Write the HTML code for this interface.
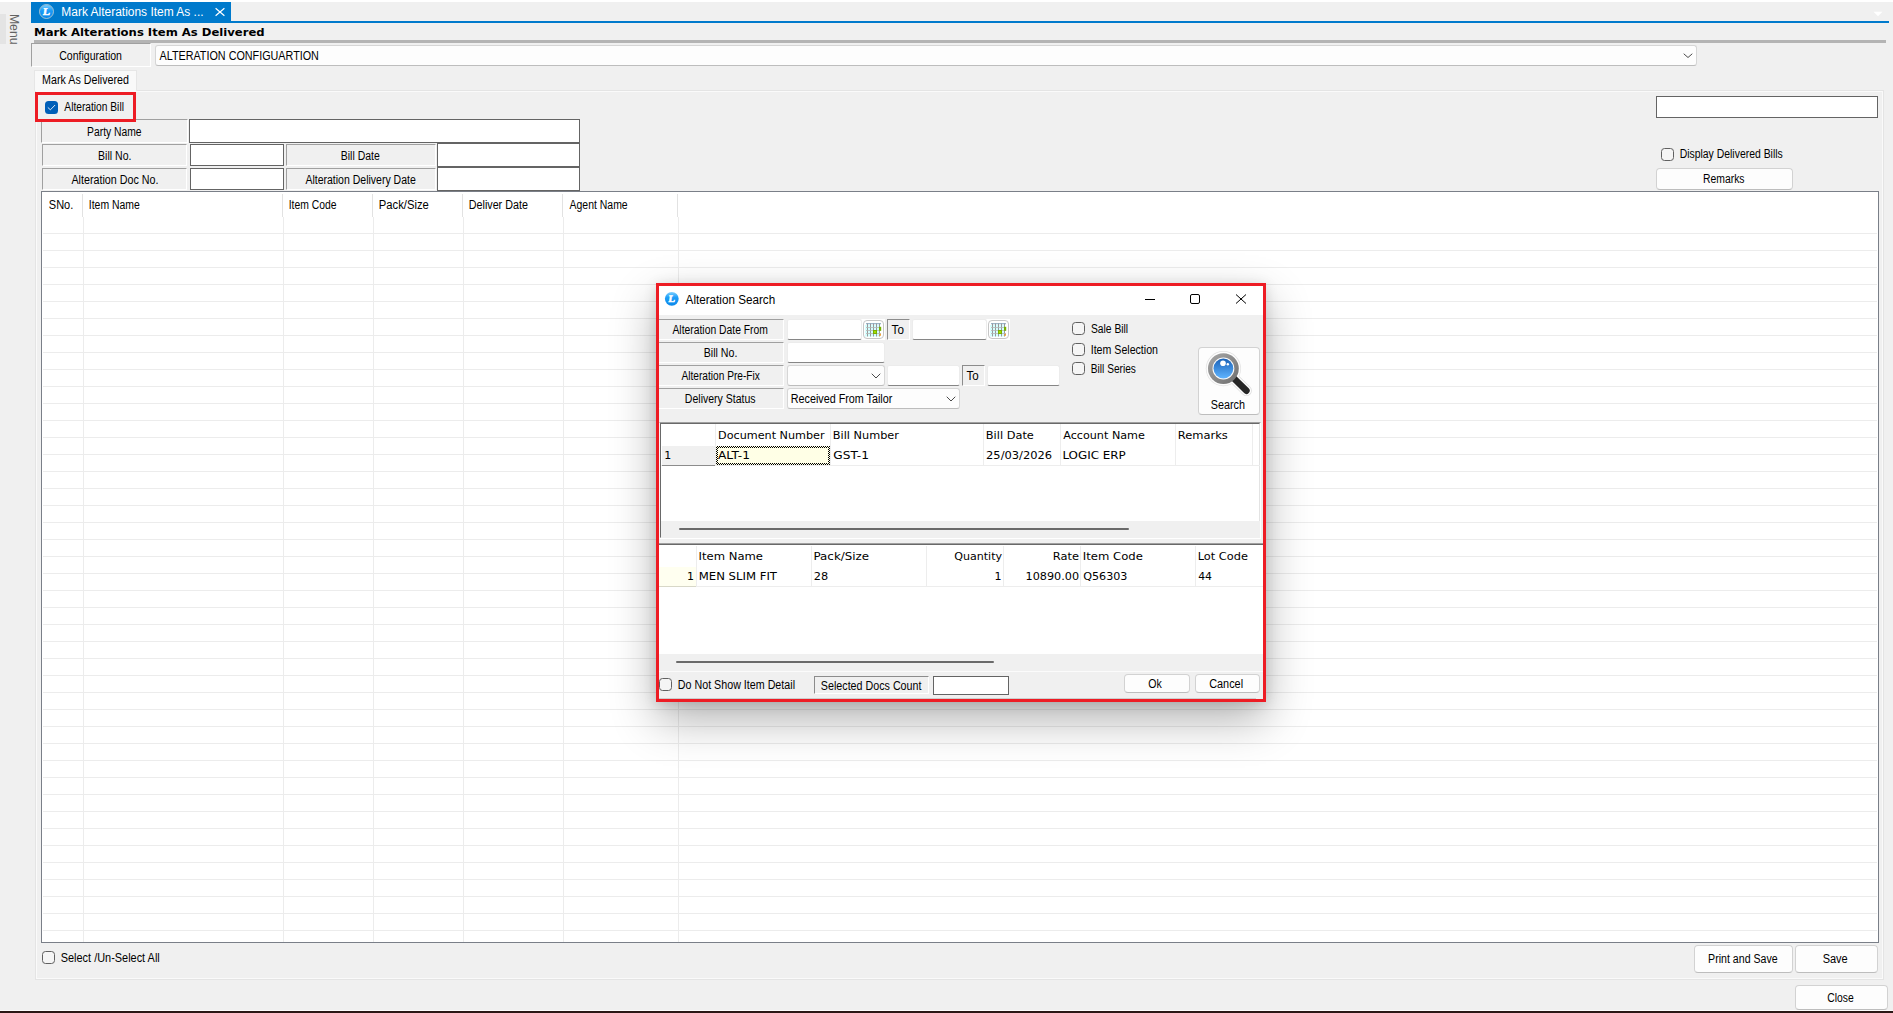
<!DOCTYPE html>
<html lang="en"><head><meta charset="utf-8"><title>Mark Alterations Item As Delivered</title>
<style>
html,body{margin:0;padding:0;}
body{width:1893px;height:1013px;overflow:hidden;background:#f0f0f0;position:relative;font-family:"Liberation Sans",sans-serif;font-size:11px;}
.layer{position:absolute;left:0;top:0;width:1893px;height:1013px;overflow:hidden;}
.layer div{position:absolute;}
.layer>svg.txt{position:absolute;left:0;top:0;}
</style></head><body>
<div class="layer" id="main">
<div style="left:0px;top:0px;width:1893px;height:2px;background:#fff;"></div>
<div style="left:0px;top:14px;width:6px;height:30px;background:#e4e4e4;"></div>
<div style="left:31px;top:2px;width:200px;height:21px;background:#007acc;"></div>
<div style="left:31px;top:21px;width:1858px;height:2px;background:#007acc;"></div>
<svg style="position:absolute;left:38px;top:2px" width="18" height="18" viewBox="0 0 18 18"><defs><linearGradient id="lg46" x1="0" y1="0" x2="0" y2="1"><stop offset="0" stop-color="#7fd0ff"/><stop offset="0.4" stop-color="#1e9ef8"/><stop offset="1" stop-color="#0a88ea"/></linearGradient></defs><circle cx="8.5" cy="9.5" r="6.6000000000000005" fill="url(#lg46)"/><circle cx="8.5" cy="9.5" r="7.0" fill="none" stroke="#efe6d8" stroke-opacity="0.85" stroke-width="0.8"/><text x="8.7" y="13.20" font-family='"Liberation Serif", serif' font-size="10.4" font-weight="bold" fill="#fff" stroke="#fff" stroke-width="0.6" text-anchor="middle" transform="skewX(-8)" style="transform-origin:8.5px 9.5px">L</text></svg>
<svg style="position:absolute;left:214px;top:6px" width="12" height="12" viewBox="0 0 12 12"><path d="M1.6 2.2 L10.4 9.8 M10.4 2.2 L1.6 9.8" stroke="#fff" stroke-width="1.2" fill="none"/></svg>
<svg style="position:absolute;left:1873px;top:11px" width="10" height="6" viewBox="0 0 10 6"><path d="M0.5 0.8 L9.5 0.8 L5 5.2 Z" fill="#fff"/></svg>
<div style="left:34px;top:40px;width:1852px;height:3px;background:#b4b4b4;"></div>
<div style="left:31px;top:43px;width:120px;height:24px;box-sizing:border-box;background:#f0f0f0;border-top:1px solid #a0a0a0;border-left:1px solid #a0a0a0;border-bottom:1px solid #ffffff;border-right:1px solid #ffffff;"></div>
<div style="left:155px;top:45px;width:1542px;height:21px;box-sizing:border-box;background:#fdfdfd;border:1px solid #d6d6d6;border-bottom-color:#bdbdbd;border-radius:3px;"></div>
<svg style="position:absolute;left:1683.0px;top:52.9px" width="10" height="6" viewBox="-1 -1 10 6"><path d="M0 0 L4.0 3.5 L8 0" fill="none" stroke="#4a4a4a" stroke-width="1" stroke-linecap="round" stroke-linejoin="round"/></svg>
<div style="left:35px;top:90px;width:1849px;height:890px;box-sizing:border-box;border:1px solid #e4e4e4;background:#f0f0f0;box-shadow:inset 0 0 0 1px #fafafa;"></div>
<div style="left:34px;top:70px;width:103px;height:21px;box-sizing:border-box;border:1px solid #e6e6e6;border-bottom:none;background:#f9f9f9;"></div>
<div style="left:41px;top:119px;width:147px;height:24px;box-sizing:border-box;background:#f0f0f0;border-top:1px solid #a0a0a0;border-left:1px solid #a0a0a0;border-bottom:1px solid #ffffff;border-right:1px solid #ffffff;"></div>
<div style="left:189px;top:119px;width:391px;height:24px;box-sizing:border-box;background:#fff;border:1px solid #646464;"></div>
<div style="left:42px;top:144px;width:145px;height:22px;box-sizing:border-box;background:#f0f0f0;border-top:1px solid #a0a0a0;border-left:1px solid #a0a0a0;border-bottom:1px solid #ffffff;border-right:1px solid #ffffff;"></div>
<div style="left:190px;top:144px;width:94px;height:22px;box-sizing:border-box;background:#fff;border:1px solid #646464;"></div>
<div style="left:286px;top:144px;width:150px;height:22px;box-sizing:border-box;background:#f0f0f0;border-top:1px solid #a0a0a0;border-left:1px solid #a0a0a0;border-bottom:1px solid #ffffff;border-right:1px solid #ffffff;"></div>
<div style="left:437px;top:143px;width:143px;height:24px;box-sizing:border-box;background:#fff;border:1px solid #646464;"></div>
<div style="left:42px;top:168px;width:145px;height:22px;box-sizing:border-box;background:#f0f0f0;border-top:1px solid #a0a0a0;border-left:1px solid #a0a0a0;border-bottom:1px solid #ffffff;border-right:1px solid #ffffff;"></div>
<div style="left:190px;top:168px;width:94px;height:22px;box-sizing:border-box;background:#fff;border:1px solid #646464;"></div>
<div style="left:286px;top:168px;width:150px;height:22px;box-sizing:border-box;background:#f0f0f0;border-top:1px solid #a0a0a0;border-left:1px solid #a0a0a0;border-bottom:1px solid #ffffff;border-right:1px solid #ffffff;"></div>
<div style="left:437px;top:167px;width:143px;height:24px;box-sizing:border-box;background:#fff;border:1px solid #646464;"></div>
<div style="left:35px;top:92px;width:101px;height:30px;box-sizing:border-box;border:3px solid #ed1c24;background:#f0f0f0;"></div>
<div style="left:45px;top:101px;width:13px;height:13px;box-sizing:border-box;background:#005fb8;border-radius:3.5px;"><svg width="13" height="13" viewBox="0 0 13 13" style="position:absolute;left:0;top:0"><path d="M3.1 6.7 L5.4 8.8 L9.8 4.3" fill="none" stroke="#fff" stroke-opacity="0.9" stroke-width="0.95" stroke-linecap="round" stroke-linejoin="round"/></svg></div>
<div style="left:1656px;top:96px;width:222px;height:22px;box-sizing:border-box;background:#fff;border:1px solid #646464;"></div>
<div style="left:1661px;top:148px;width:13px;height:13px;box-sizing:border-box;background:#f5f5f5;border:1px solid #606060;border-radius:3.5px;"></div>
<div style="left:1656px;top:168px;width:137px;height:22px;box-sizing:border-box;background:#fdfdfd;border:1px solid #d2d2d2;border-bottom-color:#bdbdbd;border-radius:4px;"></div>
<div style="left:41px;top:191px;width:1838px;height:752px;box-sizing:border-box;background:#fff;border:1px solid #7a7f88;"><div style="left:1px;top:41px;width:1834px;height:1px;background:#ececec"></div><div style="left:1px;top:58px;width:1834px;height:1px;background:#ececec"></div><div style="left:1px;top:75px;width:1834px;height:1px;background:#ececec"></div><div style="left:1px;top:92px;width:1834px;height:1px;background:#ececec"></div><div style="left:1px;top:109px;width:1834px;height:1px;background:#ececec"></div><div style="left:1px;top:126px;width:1834px;height:1px;background:#ececec"></div><div style="left:1px;top:143px;width:1834px;height:1px;background:#ececec"></div><div style="left:1px;top:160px;width:1834px;height:1px;background:#ececec"></div><div style="left:1px;top:177px;width:1834px;height:1px;background:#ececec"></div><div style="left:1px;top:194px;width:1834px;height:1px;background:#ececec"></div><div style="left:1px;top:211px;width:1834px;height:1px;background:#ececec"></div><div style="left:1px;top:228px;width:1834px;height:1px;background:#ececec"></div><div style="left:1px;top:245px;width:1834px;height:1px;background:#ececec"></div><div style="left:1px;top:262px;width:1834px;height:1px;background:#ececec"></div><div style="left:1px;top:279px;width:1834px;height:1px;background:#ececec"></div><div style="left:1px;top:296px;width:1834px;height:1px;background:#ececec"></div><div style="left:1px;top:313px;width:1834px;height:1px;background:#ececec"></div><div style="left:1px;top:330px;width:1834px;height:1px;background:#ececec"></div><div style="left:1px;top:347px;width:1834px;height:1px;background:#ececec"></div><div style="left:1px;top:364px;width:1834px;height:1px;background:#ececec"></div><div style="left:1px;top:381px;width:1834px;height:1px;background:#ececec"></div><div style="left:1px;top:398px;width:1834px;height:1px;background:#ececec"></div><div style="left:1px;top:415px;width:1834px;height:1px;background:#ececec"></div><div style="left:1px;top:432px;width:1834px;height:1px;background:#ececec"></div><div style="left:1px;top:449px;width:1834px;height:1px;background:#ececec"></div><div style="left:1px;top:466px;width:1834px;height:1px;background:#ececec"></div><div style="left:1px;top:483px;width:1834px;height:1px;background:#ececec"></div><div style="left:1px;top:500px;width:1834px;height:1px;background:#ececec"></div><div style="left:1px;top:517px;width:1834px;height:1px;background:#ececec"></div><div style="left:1px;top:534px;width:1834px;height:1px;background:#ececec"></div><div style="left:1px;top:551px;width:1834px;height:1px;background:#ececec"></div><div style="left:1px;top:568px;width:1834px;height:1px;background:#ececec"></div><div style="left:1px;top:585px;width:1834px;height:1px;background:#ececec"></div><div style="left:1px;top:602px;width:1834px;height:1px;background:#ececec"></div><div style="left:1px;top:619px;width:1834px;height:1px;background:#ececec"></div><div style="left:1px;top:636px;width:1834px;height:1px;background:#ececec"></div><div style="left:1px;top:653px;width:1834px;height:1px;background:#ececec"></div><div style="left:1px;top:670px;width:1834px;height:1px;background:#ececec"></div><div style="left:1px;top:687px;width:1834px;height:1px;background:#ececec"></div><div style="left:1px;top:704px;width:1834px;height:1px;background:#ececec"></div><div style="left:1px;top:721px;width:1834px;height:1px;background:#ececec"></div><div style="left:1px;top:738px;width:1834px;height:1px;background:#ececec"></div><div style="left:41px;top:25px;width:1px;height:725px;background:#ececec"></div><div style="left:40px;top:2px;width:1px;height:23px;background:#e2e2e2"></div><div style="left:241px;top:25px;width:1px;height:725px;background:#ececec"></div><div style="left:240px;top:2px;width:1px;height:23px;background:#e2e2e2"></div><div style="left:331px;top:25px;width:1px;height:725px;background:#ececec"></div><div style="left:330px;top:2px;width:1px;height:23px;background:#e2e2e2"></div><div style="left:421px;top:25px;width:1px;height:725px;background:#ececec"></div><div style="left:420px;top:2px;width:1px;height:23px;background:#e2e2e2"></div><div style="left:521px;top:25px;width:1px;height:725px;background:#ececec"></div><div style="left:520px;top:2px;width:1px;height:23px;background:#e2e2e2"></div><div style="left:636px;top:25px;width:1px;height:725px;background:#ececec"></div><div style="left:635px;top:2px;width:1px;height:23px;background:#e2e2e2"></div></div>
<div style="left:42px;top:951px;width:13px;height:13px;box-sizing:border-box;background:#f5f5f5;border:1px solid #606060;border-radius:3.5px;"></div>
<div style="left:1694px;top:945px;width:99px;height:28px;box-sizing:border-box;background:#fdfdfd;border:1px solid #d2d2d2;border-bottom-color:#bdbdbd;border-radius:4px;"></div>
<div style="left:1795px;top:945px;width:83px;height:28px;box-sizing:border-box;background:#fdfdfd;border:1px solid #d2d2d2;border-bottom-color:#bdbdbd;border-radius:4px;"></div>
<div style="left:1795px;top:985px;width:93px;height:25px;box-sizing:border-box;background:#fdfdfd;border:1px solid #d2d2d2;border-bottom-color:#bdbdbd;border-radius:4px;"></div>
<div style="left:0px;top:1010px;width:1893px;height:1px;background:#fbfbfb;"></div>
<div style="left:0px;top:1011px;width:1893px;height:2px;background:#2b1715;"></div>
<svg class="txt" width="1893" height="1013" viewBox="0 0 1893 1013">
<text transform="translate(10.1,13.9) rotate(90)" font-family='"Liberation Sans", sans-serif' font-size="12.5" fill="#626262" textLength="30.6" lengthAdjust="spacingAndGlyphs">Menu</text>
<text x="61.35" y="16" font-family='"Liberation Sans", sans-serif' font-size="12" fill="#fff" font-weight="normal" text-anchor="start" textLength="142.2" lengthAdjust="spacingAndGlyphs">Mark Alterations Item As ...</text>
<text x="34.12" y="36" font-family='"DejaVu Sans", "Liberation Sans", sans-serif' font-size="11" fill="#000" font-weight="bold" text-anchor="start" textLength="230.6" lengthAdjust="spacingAndGlyphs">Mark Alterations Item As Delivered</text>
<text x="59.25" y="60" font-family='"Liberation Sans", sans-serif' font-size="12" fill="#000" font-weight="normal" text-anchor="start" textLength="62.7" lengthAdjust="spacingAndGlyphs">Configuration</text>
<text x="159.53" y="60" font-family='"Liberation Sans", sans-serif' font-size="12" fill="#000" font-weight="normal" text-anchor="start" textLength="159.4" lengthAdjust="spacingAndGlyphs">ALTERATION CONFIGUARTION</text>
<text x="42.1" y="84" font-family='"Liberation Sans", sans-serif' font-size="12" fill="#000" font-weight="normal" text-anchor="start" textLength="86.8" lengthAdjust="spacingAndGlyphs">Mark As Delivered</text>
<text x="87.1" y="136" font-family='"Liberation Sans", sans-serif' font-size="12" fill="#000" font-weight="normal" text-anchor="start" textLength="54.5" lengthAdjust="spacingAndGlyphs">Party Name</text>
<text x="98.11" y="160" font-family='"Liberation Sans", sans-serif' font-size="12" fill="#000" font-weight="normal" text-anchor="start" textLength="33.3" lengthAdjust="spacingAndGlyphs">Bill No.</text>
<text x="340.76" y="160" font-family='"Liberation Sans", sans-serif' font-size="12" fill="#000" font-weight="normal" text-anchor="start" textLength="39.0" lengthAdjust="spacingAndGlyphs">Bill Date</text>
<text x="71.44" y="184" font-family='"Liberation Sans", sans-serif' font-size="12" fill="#000" font-weight="normal" text-anchor="start" textLength="87.0" lengthAdjust="spacingAndGlyphs">Alteration Doc No.</text>
<text x="305.4" y="184" font-family='"Liberation Sans", sans-serif' font-size="12" fill="#000" font-weight="normal" text-anchor="start" textLength="110.4" lengthAdjust="spacingAndGlyphs">Alteration Delivery Date</text>
<text x="64.33" y="111" font-family='"Liberation Sans", sans-serif' font-size="12" fill="#000" font-weight="normal" text-anchor="start" textLength="59.6" lengthAdjust="spacingAndGlyphs">Alteration Bill</text>
<text x="1679.66" y="158" font-family='"Liberation Sans", sans-serif' font-size="12" fill="#000" font-weight="normal" text-anchor="start" textLength="103.1" lengthAdjust="spacingAndGlyphs">Display Delivered Bills</text>
<text x="1703.05" y="183" font-family='"Liberation Sans", sans-serif' font-size="12" fill="#000" font-weight="normal" text-anchor="start" textLength="41.5" lengthAdjust="spacingAndGlyphs">Remarks</text>
<text x="48.82" y="209" font-family='"Liberation Sans", sans-serif' font-size="12" fill="#000" font-weight="normal" text-anchor="start" textLength="24.5" lengthAdjust="spacingAndGlyphs">SNo.</text>
<text x="88.8" y="209" font-family='"Liberation Sans", sans-serif' font-size="12" fill="#000" font-weight="normal" text-anchor="start" textLength="51.0" lengthAdjust="spacingAndGlyphs">Item Name</text>
<text x="288.71" y="209" font-family='"Liberation Sans", sans-serif' font-size="12" fill="#000" font-weight="normal" text-anchor="start" textLength="47.8" lengthAdjust="spacingAndGlyphs">Item Code</text>
<text x="378.81" y="209" font-family='"Liberation Sans", sans-serif' font-size="12" fill="#000" font-weight="normal" text-anchor="start" textLength="50.0" lengthAdjust="spacingAndGlyphs">Pack/Size</text>
<text x="468.78" y="209" font-family='"Liberation Sans", sans-serif' font-size="12" fill="#000" font-weight="normal" text-anchor="start" textLength="59.1" lengthAdjust="spacingAndGlyphs">Deliver Date</text>
<text x="569.58" y="209" font-family='"Liberation Sans", sans-serif' font-size="12" fill="#000" font-weight="normal" text-anchor="start" textLength="58.1" lengthAdjust="spacingAndGlyphs">Agent Name</text>
<text x="60.74" y="962" font-family='"Liberation Sans", sans-serif' font-size="12" fill="#000" font-weight="normal" text-anchor="start" textLength="99.0" lengthAdjust="spacingAndGlyphs">Select /Un-Select All</text>
<text x="1708.09" y="963" font-family='"Liberation Sans", sans-serif' font-size="12" fill="#000" font-weight="normal" text-anchor="start" textLength="69.6" lengthAdjust="spacingAndGlyphs">Print and Save</text>
<text x="1822.65" y="963" font-family='"Liberation Sans", sans-serif' font-size="12" fill="#000" font-weight="normal" text-anchor="start" textLength="25.1" lengthAdjust="spacingAndGlyphs">Save</text>
<text x="1827.29" y="1002" font-family='"Liberation Sans", sans-serif' font-size="12" fill="#000" font-weight="normal" text-anchor="start" textLength="26.5" lengthAdjust="spacingAndGlyphs">Close</text>
</svg>
</div>
<div class="layer" id="dialog">
<div style="left:656px;top:283px;width:610px;height:419px;box-sizing:border-box;background:#f0f0f0;border:3px solid #ed1c24;box-shadow:0 18px 42px 0 rgba(0,0,0,0.30),0 2px 12px 0 rgba(0,0,0,0.13);"></div>
<div style="left:659px;top:286px;width:604px;height:29px;background:#fff;"></div>
<svg style="position:absolute;left:663px;top:290px" width="18" height="18" viewBox="0 0 18 18"><defs><linearGradient id="lg671" x1="0" y1="0" x2="0" y2="1"><stop offset="0" stop-color="#7fd0ff"/><stop offset="0.4" stop-color="#1e9ef8"/><stop offset="1" stop-color="#0a88ea"/></linearGradient></defs><circle cx="8.799999999999955" cy="8.800000000000011" r="6.9" fill="url(#lg671)"/><text x="8.999999999999954" y="12.25" font-family='"Liberation Serif", serif' font-size="9.7" font-weight="bold" fill="#fff" stroke="#fff" stroke-width="0.6" text-anchor="middle" transform="skewX(-8)" style="transform-origin:8.799999999999955px 8.800000000000011px">L</text></svg>
<svg style="position:absolute;left:1140px;top:290px" width="115" height="18" viewBox="0 0 115 18"><path d="M5 9.5 H15" stroke="#000" stroke-width="1"/><rect x="50.5" y="4.5" width="9" height="9" rx="1.5" fill="none" stroke="#000" stroke-width="1"/><path d="M96 4.5 L106 13.5 M106 4.5 L96 13.5" stroke="#000" stroke-width="1"/></svg>
<div style="left:658px;top:319px;width:126px;height:21px;box-sizing:border-box;background:#f0f0f0;border-top:1px solid #a0a0a0;border-left:1px solid #a0a0a0;border-bottom:1px solid #ffffff;border-right:1px solid #ffffff;"></div>
<div style="left:658px;top:342px;width:126px;height:21px;box-sizing:border-box;background:#f0f0f0;border-top:1px solid #a0a0a0;border-left:1px solid #a0a0a0;border-bottom:1px solid #ffffff;border-right:1px solid #ffffff;"></div>
<div style="left:658px;top:365px;width:126px;height:21px;box-sizing:border-box;background:#f0f0f0;border-top:1px solid #a0a0a0;border-left:1px solid #a0a0a0;border-bottom:1px solid #ffffff;border-right:1px solid #ffffff;"></div>
<div style="left:658px;top:388px;width:126px;height:21px;box-sizing:border-box;background:#f0f0f0;border-top:1px solid #a0a0a0;border-left:1px solid #a0a0a0;border-bottom:1px solid #ffffff;border-right:1px solid #ffffff;"></div>
<div style="left:861px;top:319px;width:24px;height:21px;background:#fff;"></div>
<div style="left:986px;top:319px;width:24px;height:21px;background:#fff;"></div>
<div style="left:787px;top:319px;width:75px;height:21px;box-sizing:border-box;background:#fff;border:1px solid #ececec;border-bottom:1px solid #868686;border-radius:2.5px;"></div>
<div style="left:912px;top:319px;width:75px;height:21px;box-sizing:border-box;background:#fff;border:1px solid #ececec;border-bottom:1px solid #868686;border-radius:2.5px;"></div>
<div style="left:887px;top:319px;width:23px;height:21px;box-sizing:border-box;background:#f0f0f0;border-top:1px solid #8c8c8c;border-left:1px solid #8c8c8c;border-bottom:1px solid #ffffff;border-right:1px solid #ffffff;"></div>
<div style="left:863px;top:320px;width:21px;height:19px;box-sizing:border-box;border:1px solid #c6c6c6;border-radius:4px;background:#fff"><svg style="position:absolute;left:-1px;top:-1px" width="21" height="19" viewBox="0 0 21 19"><rect x="2" y="5" width="2.5" height="2.5" fill="#d4ffff"/><rect x="2" y="8" width="2.5" height="2.5" fill="#d4ffff"/><rect x="2" y="11" width="2.5" height="2.5" fill="#d4ffff"/><rect x="2" y="14" width="2.5" height="2.5" fill="#d4ffff"/><rect x="5" y="5" width="2.5" height="2.5" fill="#d4ffff"/><rect x="5" y="8" width="2.5" height="2.5" fill="#d4ffff"/><rect x="5" y="11" width="2.5" height="2.5" fill="#d4ffff"/><rect x="5" y="14" width="2.5" height="2.5" fill="#d4ffff"/><rect x="8" y="5" width="2.5" height="2.5" fill="#d4ffff"/><rect x="8" y="8" width="2.5" height="2.5" fill="#d4ffff"/><rect x="8" y="11" width="2.5" height="2.5" fill="#d4ffff"/><rect x="8" y="14" width="2.5" height="2.5" fill="#d4ffff"/><rect x="11" y="5" width="2.5" height="2.5" fill="#d4ffff"/><rect x="11" y="8" width="2.5" height="2.5" fill="#d4ffff"/><rect x="11" y="11" width="2.5" height="2.5" fill="#d4ffff"/><rect x="11" y="14" width="2.5" height="2.5" fill="#d4ffff"/><rect x="14" y="5" width="2.5" height="2.5" fill="#d4ffff"/><rect x="14" y="8" width="2.5" height="2.5" fill="#d4ffff"/><rect x="14" y="11" width="2.5" height="2.5" fill="#d4ffff"/><rect x="14" y="14" width="2.5" height="2.5" fill="#d4ffff"/><rect x="3" y="3" width="15" height="1.3" fill="#9bb8cc"/><path d="M4.5 3.5 V16.5" stroke="#8e8e8e" stroke-width="0.9"/><path d="M7.5 3.5 V16.5" stroke="#8e8e8e" stroke-width="0.9"/><path d="M10.5 3.5 V16.5" stroke="#8e8e8e" stroke-width="0.9"/><path d="M13.5 3.5 V16.5" stroke="#8e8e8e" stroke-width="0.9"/><path d="M16.5 3.5 V16.5" stroke="#8e8e8e" stroke-width="0.9"/><path d="M3 7.5 H18" stroke="#b4b4b4" stroke-width="0.8"/><path d="M3 10.5 H18" stroke="#b4b4b4" stroke-width="0.8"/><path d="M3 13.5 H18" stroke="#b4b4b4" stroke-width="0.8"/><rect x="10" y="10" width="4" height="4" fill="#76b000"/><rect x="11" y="11" width="2" height="2" fill="#a6dc00"/><rect x="16" y="6.8" width="2.2" height="4" fill="#76b000"/><path d="M15.5 15.8 L18 13.2 L18 15.8 Z" fill="#f0a030"/></svg></div>
<div style="left:988px;top:320px;width:21px;height:19px;box-sizing:border-box;border:1px solid #c6c6c6;border-radius:4px;background:#fff"><svg style="position:absolute;left:-1px;top:-1px" width="21" height="19" viewBox="0 0 21 19"><rect x="2" y="5" width="2.5" height="2.5" fill="#d4ffff"/><rect x="2" y="8" width="2.5" height="2.5" fill="#d4ffff"/><rect x="2" y="11" width="2.5" height="2.5" fill="#d4ffff"/><rect x="2" y="14" width="2.5" height="2.5" fill="#d4ffff"/><rect x="5" y="5" width="2.5" height="2.5" fill="#d4ffff"/><rect x="5" y="8" width="2.5" height="2.5" fill="#d4ffff"/><rect x="5" y="11" width="2.5" height="2.5" fill="#d4ffff"/><rect x="5" y="14" width="2.5" height="2.5" fill="#d4ffff"/><rect x="8" y="5" width="2.5" height="2.5" fill="#d4ffff"/><rect x="8" y="8" width="2.5" height="2.5" fill="#d4ffff"/><rect x="8" y="11" width="2.5" height="2.5" fill="#d4ffff"/><rect x="8" y="14" width="2.5" height="2.5" fill="#d4ffff"/><rect x="11" y="5" width="2.5" height="2.5" fill="#d4ffff"/><rect x="11" y="8" width="2.5" height="2.5" fill="#d4ffff"/><rect x="11" y="11" width="2.5" height="2.5" fill="#d4ffff"/><rect x="11" y="14" width="2.5" height="2.5" fill="#d4ffff"/><rect x="14" y="5" width="2.5" height="2.5" fill="#d4ffff"/><rect x="14" y="8" width="2.5" height="2.5" fill="#d4ffff"/><rect x="14" y="11" width="2.5" height="2.5" fill="#d4ffff"/><rect x="14" y="14" width="2.5" height="2.5" fill="#d4ffff"/><rect x="3" y="3" width="15" height="1.3" fill="#9bb8cc"/><path d="M4.5 3.5 V16.5" stroke="#8e8e8e" stroke-width="0.9"/><path d="M7.5 3.5 V16.5" stroke="#8e8e8e" stroke-width="0.9"/><path d="M10.5 3.5 V16.5" stroke="#8e8e8e" stroke-width="0.9"/><path d="M13.5 3.5 V16.5" stroke="#8e8e8e" stroke-width="0.9"/><path d="M16.5 3.5 V16.5" stroke="#8e8e8e" stroke-width="0.9"/><path d="M3 7.5 H18" stroke="#b4b4b4" stroke-width="0.8"/><path d="M3 10.5 H18" stroke="#b4b4b4" stroke-width="0.8"/><path d="M3 13.5 H18" stroke="#b4b4b4" stroke-width="0.8"/><rect x="10" y="10" width="4" height="4" fill="#76b000"/><rect x="11" y="11" width="2" height="2" fill="#a6dc00"/><rect x="16" y="6.8" width="2.2" height="4" fill="#76b000"/><path d="M15.5 15.8 L18 13.2 L18 15.8 Z" fill="#f0a030"/></svg></div>
<div style="left:787px;top:342px;width:98px;height:21px;box-sizing:border-box;background:#fff;border:1px solid #ececec;border-bottom:1px solid #868686;border-radius:2.5px;"></div>
<div style="left:787px;top:365px;width:98px;height:21px;box-sizing:border-box;background:#fdfdfd;border:1px solid #d6d6d6;border-bottom-color:#bdbdbd;border-radius:3px;"></div>
<svg style="position:absolute;left:870.5px;top:372.75px" width="10" height="6.5" viewBox="-1 -1 10 6.5"><path d="M0 0 L4.0 4.0 L8 0" fill="none" stroke="#4a4a4a" stroke-width="1" stroke-linecap="round" stroke-linejoin="round"/></svg>
<div style="left:887px;top:365px;width:73px;height:21px;box-sizing:border-box;background:#fff;border:1px solid #ececec;border-bottom:1px solid #868686;border-radius:2.5px;"></div>
<div style="left:962px;top:365px;width:23px;height:21px;box-sizing:border-box;background:#f0f0f0;border-top:1px solid #8c8c8c;border-left:1px solid #8c8c8c;border-bottom:1px solid #ffffff;border-right:1px solid #ffffff;"></div>
<div style="left:987px;top:365px;width:73px;height:21px;box-sizing:border-box;background:#fff;border:1px solid #ececec;border-bottom:1px solid #868686;border-radius:2.5px;"></div>
<div style="left:787px;top:388px;width:173px;height:21px;box-sizing:border-box;background:#fdfdfd;border:1px solid #d6d6d6;border-bottom-color:#bdbdbd;border-radius:3px;"></div>
<svg style="position:absolute;left:945.5px;top:395.75px" width="10" height="6.5" viewBox="-1 -1 10 6.5"><path d="M0 0 L4.0 4.0 L8 0" fill="none" stroke="#4a4a4a" stroke-width="1" stroke-linecap="round" stroke-linejoin="round"/></svg>
<div style="left:1072px;top:322px;width:13px;height:13px;box-sizing:border-box;background:#f5f5f5;border:1px solid #606060;border-radius:3.5px;"></div>
<div style="left:1072px;top:343px;width:13px;height:13px;box-sizing:border-box;background:#f5f5f5;border:1px solid #606060;border-radius:3.5px;"></div>
<div style="left:1072px;top:362px;width:13px;height:13px;box-sizing:border-box;background:#f5f5f5;border:1px solid #606060;border-radius:3.5px;"></div>
<div style="left:1198px;top:347px;width:62px;height:68px;box-sizing:border-box;background:#fdfdfd;border:1px solid #d2d2d2;border-bottom-color:#bdbdbd;border-radius:4px;"></div>
<svg style="position:absolute;left:1203px;top:349px" width="54" height="52" viewBox="1203 349 54 52"><defs><linearGradient id="lens" x1="0" y1="0" x2="0" y2="1"><stop offset="0" stop-color="#1a62b8"/><stop offset="1" stop-color="#5fb4ff"/></linearGradient><linearGradient id="ring" x1="0" y1="0" x2="1" y2="1"><stop offset="0" stop-color="#a8a8a8"/><stop offset="1" stop-color="#6e6e6e"/></linearGradient></defs><path d="M1233.5 378 L1246.4 390.7" stroke="#dcdcdc" stroke-width="10.8" stroke-linecap="round"/><circle cx="1223.4" cy="368.6" r="17.6" fill="#e2e2e2"/><path d="M1233.5 378 L1246.4 390.7" stroke="#fdfdfd" stroke-width="9.4" stroke-linecap="round"/><circle cx="1223.4" cy="368.6" r="16.9" fill="#fdfdfd"/><path d="M1233.5 378 L1246.4 390.7" stroke="#262626" stroke-width="6.6" stroke-linecap="round"/><circle cx="1223.4" cy="368.6" r="15.4" fill="url(#ring)"/><circle cx="1223.4" cy="368.5" r="10.9" fill="#fafafa"/><circle cx="1223.4" cy="368.5" r="9.9" fill="url(#lens)"/><circle cx="1223" cy="363.2" r="2.8" fill="#fff"/><circle cx="1227.8" cy="364.3" r="1.2" fill="#fff"/></svg>
<div style="left:659px;top:422px;width:602px;height:117px;box-sizing:border-box;background:#fff;border-top:1px solid #a0a0a0;border-left:1px solid #f4f4f4;border-right:1px solid #fff;border-bottom:1px solid #fff;"></div>
<div style="left:660px;top:423px;width:600px;height:115px;box-sizing:border-box;border-top:1px solid #696969;border-left:1px solid #696969;border-right:1px solid #e3e3e3;border-bottom:1px solid #e3e3e3;"></div>
<div style="left:715px;top:424px;width:1px;height:42px;background:#ededed;"></div>
<div style="left:830px;top:424px;width:1px;height:42px;background:#ededed;"></div>
<div style="left:983px;top:424px;width:1px;height:42px;background:#ededed;"></div>
<div style="left:1060px;top:424px;width:1px;height:42px;background:#ededed;"></div>
<div style="left:1175px;top:424px;width:1px;height:42px;background:#ededed;"></div>
<div style="left:1252px;top:424px;width:1px;height:42px;background:#ededed;"></div>
<div style="left:661px;top:465px;width:599px;height:1px;background:#ededed;"></div>
<div style="left:662px;top:446px;width:53px;height:20px;background:#f0f0f0;border-bottom:1px solid #8c8c8c;box-sizing:border-box;"></div>
<div style="left:716px;top:446px;width:114px;height:19px;background:repeating-conic-gradient(#000 0 25%, #ffffe6 0 50%) 0 0/2px 2px;"></div>
<div style="left:718px;top:448px;width:110px;height:15px;background:#ffffe6;"></div>
<div style="left:661px;top:521px;width:599px;height:17px;background:#f0f0f0;"></div>
<div style="left:679px;top:528px;width:450px;height:2px;background:#6a6a6a;border-radius:1px;"></div>
<div style="left:659px;top:543px;width:604px;height:129px;box-sizing:border-box;background:#fff;border-top:1px solid #a0a0a0;"></div>
<div style="left:659px;top:544px;width:604px;height:1px;background:#696969;"></div>
<div style="left:696px;top:546px;width:1px;height:41px;background:#ededed;"></div>
<div style="left:811px;top:546px;width:1px;height:41px;background:#ededed;"></div>
<div style="left:926px;top:546px;width:1px;height:41px;background:#ededed;"></div>
<div style="left:1003px;top:546px;width:1px;height:41px;background:#ededed;"></div>
<div style="left:1080px;top:546px;width:1px;height:41px;background:#ededed;"></div>
<div style="left:1195px;top:546px;width:1px;height:41px;background:#ededed;"></div>
<div style="left:659px;top:586px;width:604px;height:1px;background:#ededed;"></div>
<div style="left:659px;top:567px;width:37px;height:20px;background:#fffff0;border-bottom:1px solid #d8d8c8;box-sizing:border-box;"></div>
<div style="left:659px;top:654px;width:604px;height:18px;background:#f0f0f0;"></div>
<div style="left:676px;top:661px;width:318px;height:2px;background:#6a6a6a;border-radius:1px;"></div>
<div style="left:659px;top:671px;width:604px;height:1px;background:#fbfbfb;"></div>
<div style="left:659px;top:678px;width:13px;height:13px;box-sizing:border-box;background:#f5f5f5;border:1px solid #606060;border-radius:3.5px;"></div>
<div style="left:814px;top:676px;width:115px;height:18px;box-sizing:border-box;background:#f0f0f0;border-top:1px solid #8c8c8c;border-left:1px solid #8c8c8c;border-bottom:1px solid #ffffff;border-right:1px solid #ffffff;"></div>
<div style="left:933px;top:676px;width:76px;height:19px;box-sizing:border-box;background:#fff;border:1px solid #646464;"></div>
<div style="left:1124px;top:674px;width:66px;height:19px;box-sizing:border-box;background:#fdfdfd;border:1px solid #d2d2d2;border-bottom-color:#bdbdbd;border-radius:4px;"></div>
<div style="left:1195px;top:674px;width:65px;height:19px;box-sizing:border-box;background:#fdfdfd;border:1px solid #d2d2d2;border-bottom-color:#bdbdbd;border-radius:4px;"></div>
<div style="left:659px;top:698px;width:597px;height:1px;background:#cdcdcd;"></div>
<div style="left:656px;top:283px;width:610px;height:419px;box-sizing:border-box;border:3px solid #ed1c24;"></div>
<svg class="txt" width="1893" height="1013" viewBox="0 0 1893 1013">
<text x="685.61" y="304" font-family='"Liberation Sans", sans-serif' font-size="12" fill="#000" font-weight="normal" text-anchor="start" textLength="89.6" lengthAdjust="spacingAndGlyphs">Alteration Search</text>
<text x="672.45" y="334" font-family='"Liberation Sans", sans-serif' font-size="12" fill="#000" font-weight="normal" text-anchor="start" textLength="95.5" lengthAdjust="spacingAndGlyphs">Alteration Date From</text>
<text x="703.76" y="357" font-family='"Liberation Sans", sans-serif' font-size="12" fill="#000" font-weight="normal" text-anchor="start" textLength="33.6" lengthAdjust="spacingAndGlyphs">Bill No.</text>
<text x="681.49" y="380" font-family='"Liberation Sans", sans-serif' font-size="12" fill="#000" font-weight="normal" text-anchor="start" textLength="78.4" lengthAdjust="spacingAndGlyphs">Alteration Pre-Fix</text>
<text x="684.84" y="403" font-family='"Liberation Sans", sans-serif' font-size="12" fill="#000" font-weight="normal" text-anchor="start" textLength="70.8" lengthAdjust="spacingAndGlyphs">Delivery Status</text>
<text x="891.59" y="334" font-family='"Liberation Sans", sans-serif' font-size="12" fill="#000" font-weight="normal" text-anchor="start" textLength="12.3" lengthAdjust="spacingAndGlyphs">To</text>
<text x="966.54" y="380" font-family='"Liberation Sans", sans-serif' font-size="12" fill="#000" font-weight="normal" text-anchor="start" textLength="12.2" lengthAdjust="spacingAndGlyphs">To</text>
<text x="790.77" y="403" font-family='"Liberation Sans", sans-serif' font-size="12" fill="#000" font-weight="normal" text-anchor="start" textLength="101.5" lengthAdjust="spacingAndGlyphs">Received From Tailor</text>
<text x="1090.95" y="333" font-family='"Liberation Sans", sans-serif' font-size="12" fill="#000" font-weight="normal" text-anchor="start" textLength="37.2" lengthAdjust="spacingAndGlyphs">Sale Bill</text>
<text x="1090.71" y="354" font-family='"Liberation Sans", sans-serif' font-size="12" fill="#000" font-weight="normal" text-anchor="start" textLength="67.3" lengthAdjust="spacingAndGlyphs">Item Selection</text>
<text x="1090.83" y="373" font-family='"Liberation Sans", sans-serif' font-size="12" fill="#000" font-weight="normal" text-anchor="start" textLength="45.1" lengthAdjust="spacingAndGlyphs">Bill Series</text>
<text x="1210.75" y="409" font-family='"Liberation Sans", sans-serif' font-size="12" fill="#000" font-weight="normal" text-anchor="start" textLength="34.2" lengthAdjust="spacingAndGlyphs">Search</text>
<text x="718.02" y="439" font-family='"DejaVu Sans", "Liberation Sans", sans-serif' font-size="11" fill="#000" font-weight="normal" text-anchor="start" textLength="106.6" lengthAdjust="spacingAndGlyphs">Document Number</text>
<text x="832.85" y="439" font-family='"DejaVu Sans", "Liberation Sans", sans-serif' font-size="11" fill="#000" font-weight="normal" text-anchor="start" textLength="66.1" lengthAdjust="spacingAndGlyphs">Bill Number</text>
<text x="985.84" y="439" font-family='"DejaVu Sans", "Liberation Sans", sans-serif' font-size="11" fill="#000" font-weight="normal" text-anchor="start" textLength="48.0" lengthAdjust="spacingAndGlyphs">Bill Date</text>
<text x="1063.19" y="439" font-family='"DejaVu Sans", "Liberation Sans", sans-serif' font-size="11" fill="#000" font-weight="normal" text-anchor="start" textLength="81.7" lengthAdjust="spacingAndGlyphs">Account Name</text>
<text x="1177.75" y="439" font-family='"DejaVu Sans", "Liberation Sans", sans-serif' font-size="11" fill="#000" font-weight="normal" text-anchor="start" textLength="50.1" lengthAdjust="spacingAndGlyphs">Remarks</text>
<text x="664.2" y="459" font-family='"DejaVu Sans", "Liberation Sans", sans-serif' font-size="11" fill="#000" font-weight="normal" text-anchor="start">1</text>
<text x="718.0" y="459" font-family='"DejaVu Sans", "Liberation Sans", sans-serif' font-size="11" fill="#000" font-weight="normal" text-anchor="start" textLength="31.9" lengthAdjust="spacingAndGlyphs">ALT-1</text>
<text x="833.34" y="459" font-family='"DejaVu Sans", "Liberation Sans", sans-serif' font-size="11" fill="#000" font-weight="normal" text-anchor="start" textLength="35.6" lengthAdjust="spacingAndGlyphs">GST-1</text>
<text x="986.08" y="459" font-family='"DejaVu Sans", "Liberation Sans", sans-serif' font-size="11" fill="#000" font-weight="normal" text-anchor="start" textLength="66.0" lengthAdjust="spacingAndGlyphs">25/03/2026</text>
<text x="1062.41" y="459" font-family='"DejaVu Sans", "Liberation Sans", sans-serif' font-size="11" fill="#000" font-weight="normal" text-anchor="start" textLength="63.4" lengthAdjust="spacingAndGlyphs">LOGIC ERP</text>
<text x="698.61" y="560" font-family='"DejaVu Sans", "Liberation Sans", sans-serif' font-size="11" fill="#000" font-weight="normal" text-anchor="start" textLength="64.4" lengthAdjust="spacingAndGlyphs">Item Name</text>
<text x="813.49" y="560" font-family='"DejaVu Sans", "Liberation Sans", sans-serif' font-size="11" fill="#000" font-weight="normal" text-anchor="start" textLength="55.6" lengthAdjust="spacingAndGlyphs">Pack/Size</text>
<text x="954.2" y="560" font-family='"DejaVu Sans", "Liberation Sans", sans-serif' font-size="11" fill="#000" font-weight="normal" text-anchor="start" textLength="47.9" lengthAdjust="spacingAndGlyphs">Quantity</text>
<text x="1052.74" y="560" font-family='"DejaVu Sans", "Liberation Sans", sans-serif' font-size="11" fill="#000" font-weight="normal" text-anchor="start" textLength="26.2" lengthAdjust="spacingAndGlyphs">Rate</text>
<text x="1082.82" y="560" font-family='"DejaVu Sans", "Liberation Sans", sans-serif' font-size="11" fill="#000" font-weight="normal" text-anchor="start" textLength="60.0" lengthAdjust="spacingAndGlyphs">Item Code</text>
<text x="1197.72" y="560" font-family='"DejaVu Sans", "Liberation Sans", sans-serif' font-size="11" fill="#000" font-weight="normal" text-anchor="start" textLength="50.2" lengthAdjust="spacingAndGlyphs">Lot Code</text>
<text x="687.0" y="580" font-family='"DejaVu Sans", "Liberation Sans", sans-serif' font-size="11" fill="#000" font-weight="normal" text-anchor="start">1</text>
<text x="698.77" y="580" font-family='"DejaVu Sans", "Liberation Sans", sans-serif' font-size="11" fill="#000" font-weight="normal" text-anchor="start" textLength="78.2" lengthAdjust="spacingAndGlyphs">MEN SLIM FIT</text>
<text x="813.84" y="580" font-family='"DejaVu Sans", "Liberation Sans", sans-serif' font-size="11" fill="#000" font-weight="normal" text-anchor="start" textLength="14.4" lengthAdjust="spacingAndGlyphs">28</text>
<text x="994.6" y="580" font-family='"DejaVu Sans", "Liberation Sans", sans-serif' font-size="11" fill="#000" font-weight="normal" text-anchor="start">1</text>
<text x="1025.56" y="580" font-family='"DejaVu Sans", "Liberation Sans", sans-serif' font-size="11" fill="#000" font-weight="normal" text-anchor="start" textLength="53.5" lengthAdjust="spacingAndGlyphs">10890.00</text>
<text x="1083.18" y="580" font-family='"DejaVu Sans", "Liberation Sans", sans-serif' font-size="11" fill="#000" font-weight="normal" text-anchor="start" textLength="44.3" lengthAdjust="spacingAndGlyphs">Q56303</text>
<text x="1198.13" y="580" font-family='"DejaVu Sans", "Liberation Sans", sans-serif' font-size="11" fill="#000" font-weight="normal" text-anchor="start" textLength="13.8" lengthAdjust="spacingAndGlyphs">44</text>
<text x="677.82" y="689" font-family='"Liberation Sans", sans-serif' font-size="12" fill="#000" font-weight="normal" text-anchor="start" textLength="117.2" lengthAdjust="spacingAndGlyphs">Do Not Show Item Detail</text>
<text x="820.86" y="690" font-family='"Liberation Sans", sans-serif' font-size="12" fill="#000" font-weight="normal" text-anchor="start" textLength="100.6" lengthAdjust="spacingAndGlyphs">Selected Docs Count</text>
<text x="1148.31" y="688" font-family='"Liberation Sans", sans-serif' font-size="12" fill="#000" font-weight="normal" text-anchor="start" textLength="13.5" lengthAdjust="spacingAndGlyphs">Ok</text>
<text x="1209.18" y="688" font-family='"Liberation Sans", sans-serif' font-size="12" fill="#000" font-weight="normal" text-anchor="start" textLength="33.9" lengthAdjust="spacingAndGlyphs">Cancel</text>
</svg>
</div>
</body></html>
